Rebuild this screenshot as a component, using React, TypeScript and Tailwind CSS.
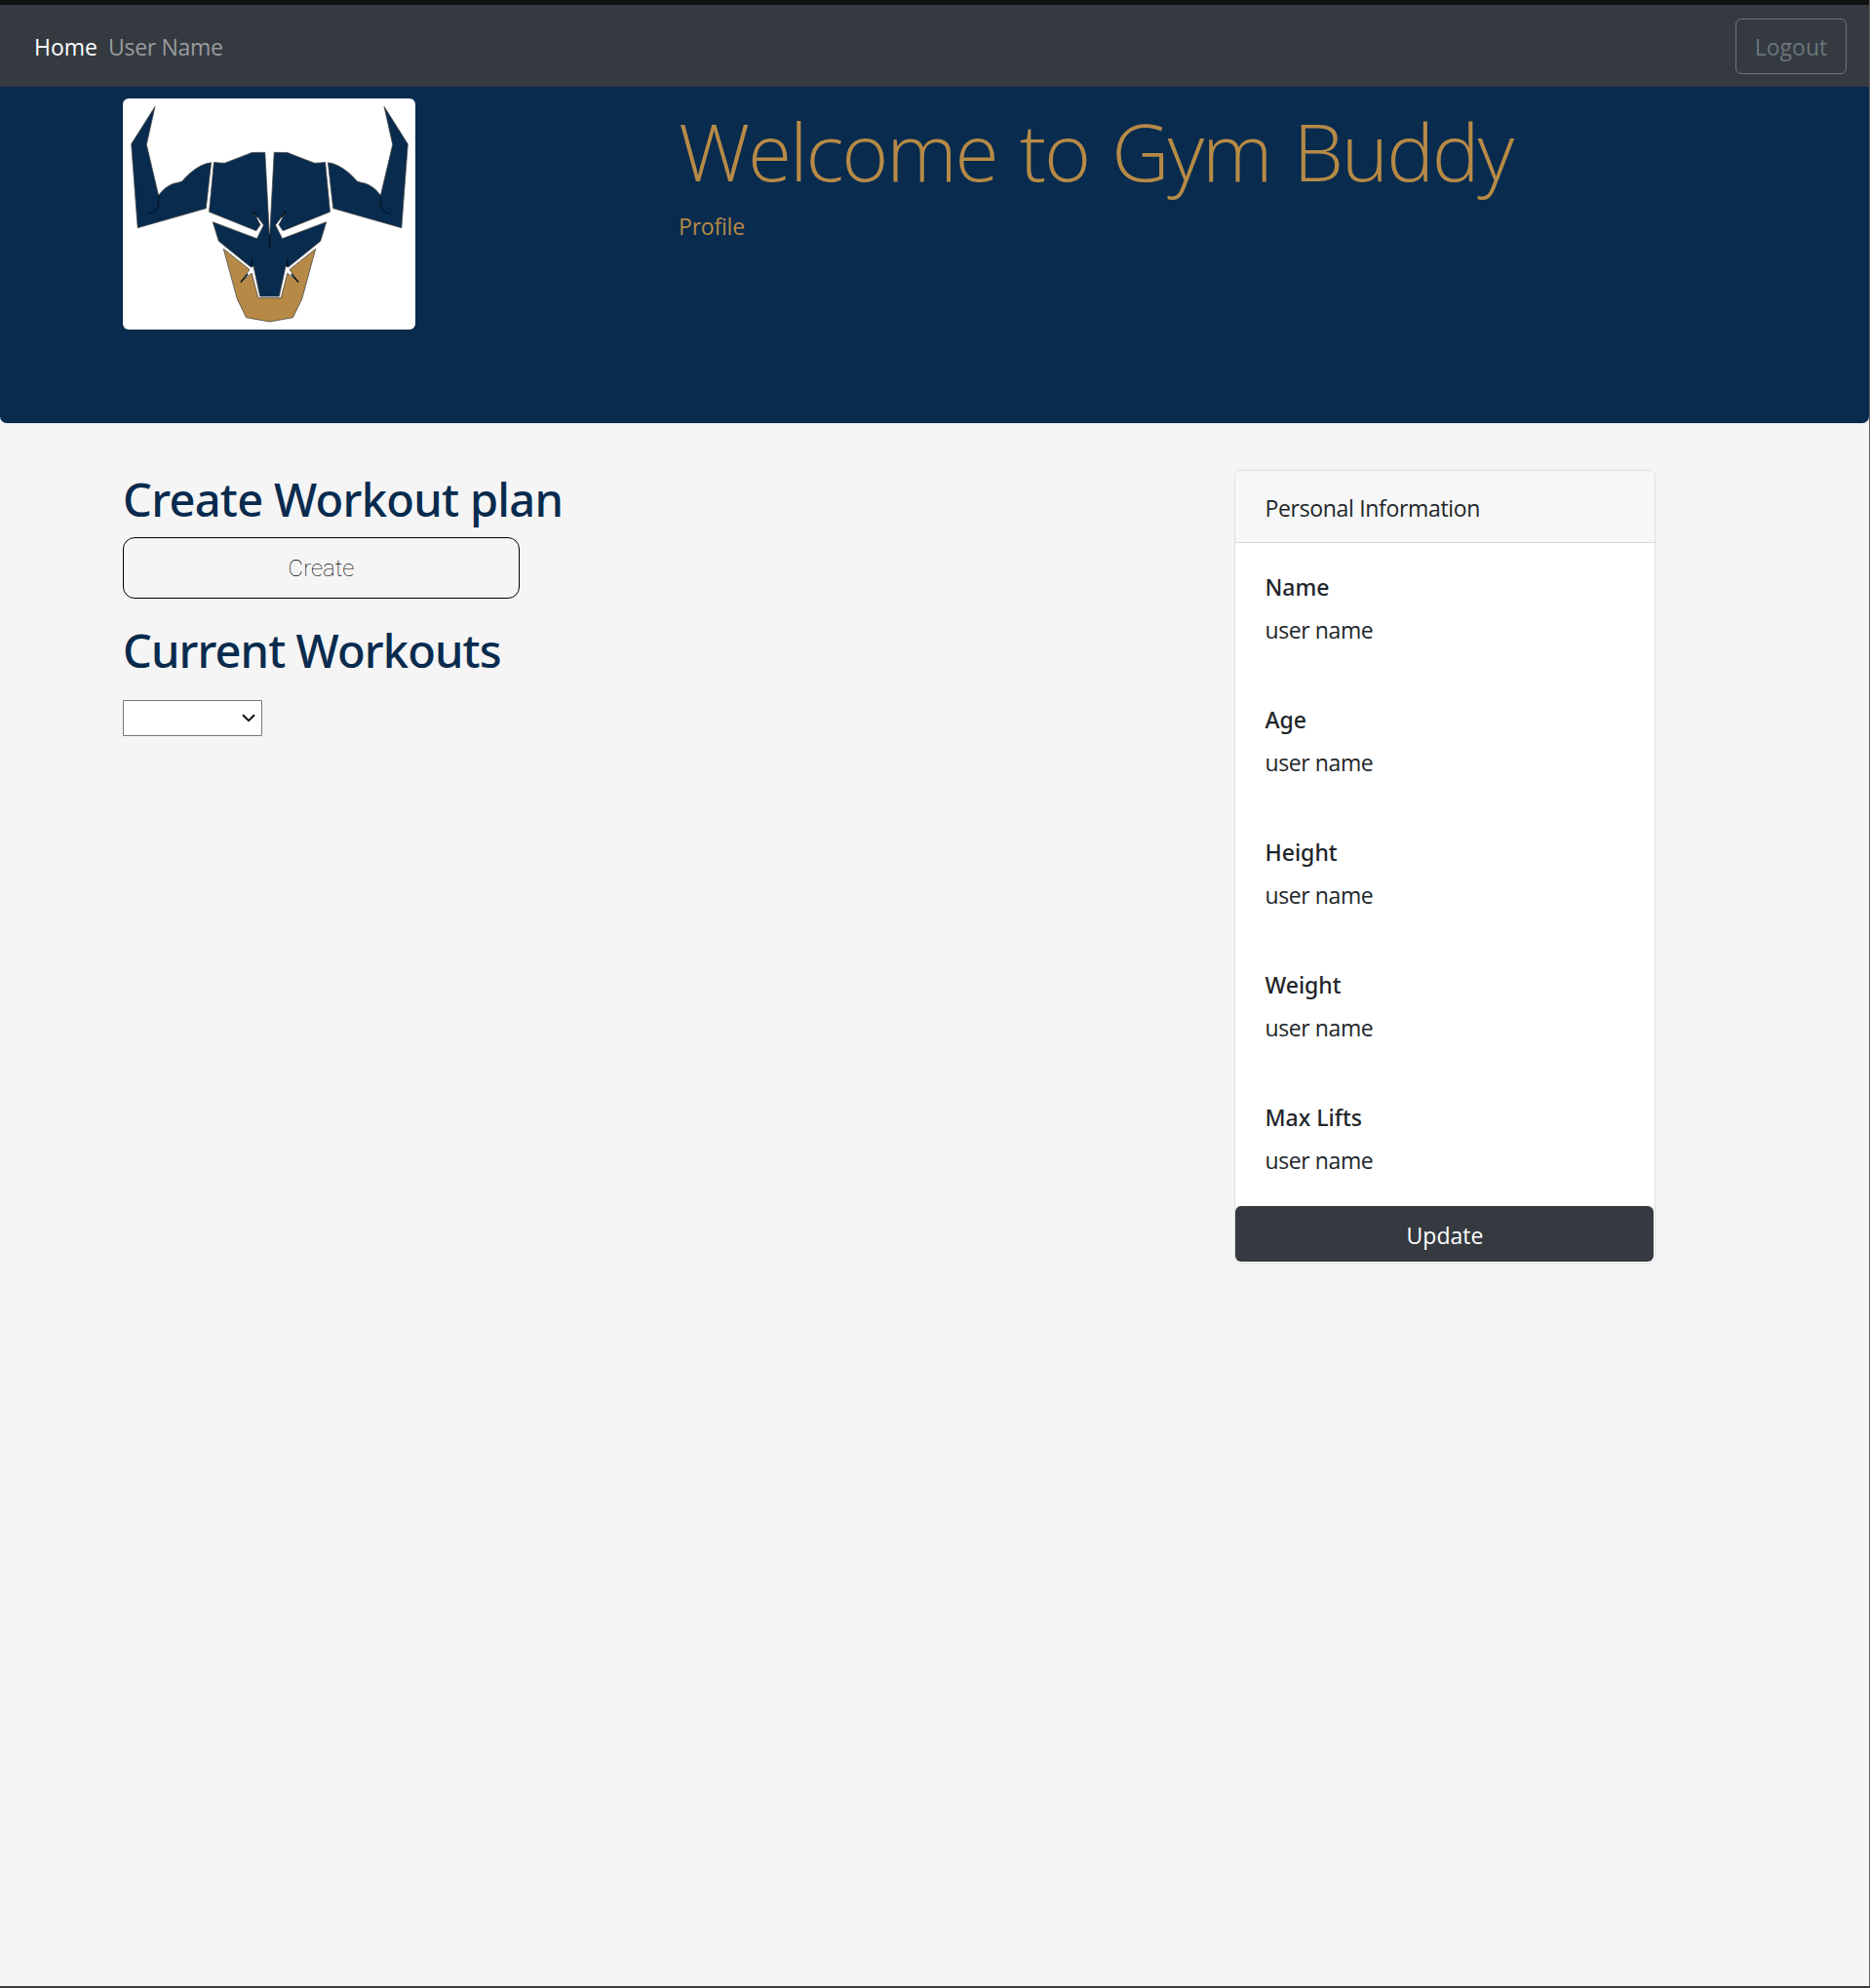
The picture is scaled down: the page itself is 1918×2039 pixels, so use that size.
const stats = ["Name", "Age", "Height", "Weight", "Max Lifts"];

/* Left half of the bull; the right half is the same artwork mirrored. */
function BullHalf() {
  return (
    <>
      <path
        d="M159 109.3 L134.7 147.7 L141.2 233.7 L211.3 213.7 L216.6 166.8 Q207 167.5 195 177.5 Q190 182 186.7 186 Q183 187.4 178 188.2 Q169 191.5 162.6 200.4 L150.3 148.3 Z"
        fill="#082b4e"
      />
      <path
        d="M219.4 166.5 Q226 167.3 230.7 167.2 L258.3 156.5 L271.8 156.3 L276.5 245 L276.5 304 L266.7 304 L260 273 L257.3 274 L224.3 247.3 L218.3 227.7 L263.5 244.7 L270.4 230.9 L264.6 223 L260 217.3 L267 230.6 L262.8 236.7 L214.5 217.3 Z"
        fill="#082b4e"
      />
      <path
        d="M229.3 255.3 L256 276.5 L247.2 289 L258.2 280.2 L264.8 305.6 L276.6 305.6 L276.6 330 L252.6 325.7 L243.3 306.7 Z"
        fill="#b68a46"
      />
    </>
  );
}

function BullDetails() {
  return (
    <g stroke="#05101d" fill="none">
      <path d="M162.6 200.4 L162.5 210 Q162 217 152.3 219.3" strokeWidth="1.1" />
      <path d="M259.8 216.8 L264 222.6" strokeWidth="1.5" />
      <path d="M258.2 265.6 L258.5 273.4" strokeWidth="1.4" />
      <path d="M246.8 289.5 L254.2 281" strokeWidth="1.3" />
    </g>
  );
}

function BullLogo() {
  return (
    <svg viewBox="126 101 300 237" className="block h-[237px] w-[300px]">
      <g stroke="#4a4a48" strokeWidth="0.8">
        <BullHalf />
        <g transform="translate(553 0) scale(-1 1)">
          <BullHalf />
        </g>
      </g>
      {/* Seamless centre joins of the face and jaw */}
      <rect x="274" y="246" width="5" height="57.5" fill="#082b4e" />
      <rect x="274" y="306.1" width="5" height="23.1" fill="#b68a46" />
      <BullDetails />
      <g transform="translate(553 0) scale(-1 1)">
        <BullDetails />
      </g>
      <path d="M276.5 240 L276.5 254" stroke="#05101d" strokeWidth="1.3" />
    </svg>
  );
}

function NavBar() {
  return (
    <nav className="flex h-[84px] items-center justify-between bg-[#343a40] pr-[23px] pl-[35px] text-[23px] leading-9">
      <div className="flex gap-[11px] pt-0.5">
        <a className="text-white">Home</a>
        <a className="tracking-[-0.3px] text-[#999c9f]">User Name</a>
      </div>
      <button className="mt-px h-[57px] w-[114px] rounded-md border border-[#6c757d] pt-px text-[#6c757d]">
        Logout
      </button>
    </nav>
  );
}

function Hero() {
  return (
    <header className="flex h-[345px] rounded-b-[7px] bg-[#082b4e] pt-3 pl-[126px] text-[#b68a46]">
      <div className="h-[237px] w-[300px] overflow-hidden rounded-md bg-white">
        <BullLogo />
      </div>
      <div className="ml-[270px]">
        <h1 className="mt-[3px] text-[82px] leading-[100px] font-light tracking-[-2.1px] whitespace-nowrap [word-spacing:4px]">
          Welcome to Gym Buddy
        </h1>
        <p className="mt-[10px] text-[23px] leading-9 tracking-[-0.2px]">Profile</p>
      </div>
    </header>
  );
}

function Workouts() {
  return (
    <section className="w-[600px] pt-[50px]">
      <h2 className="font-['Noto_Sans',sans-serif] text-[47px] leading-[56px] font-medium tracking-[-0.7px] text-[#082b4e]">
        Create Workout plan
      </h2>
      <button className="mt-[11px] block h-[63px] w-[407px] rounded-xl border border-black font-['Roboto',sans-serif] text-[24px] leading-9 font-thin text-black">
        Create
      </button>
      <h2 className="mt-[25px] font-['Noto_Sans',sans-serif] text-[47px] leading-[56px] font-medium tracking-[-0.9px] text-[#082b4e]">
        Current Workouts
      </h2>
      <div className="mt-[23px] flex h-[37px] w-[143px] items-center justify-end rounded-[1px] border border-[#767676] bg-white pr-[6px]">
        <svg viewBox="0 0 14 9" className="h-[9px] w-[14px]" fill="none" stroke="#101010" strokeWidth="2">
          <path d="M1 1.2 L7 7.2 L13 1.2" />
        </svg>
      </div>
    </section>
  );
}

function PersonalInfo() {
  return (
    <aside className="flex h-[814px] w-[432px] flex-col rounded-md border border-[#dfdfdf] bg-white text-[23px] text-[#212529]">
      <div className="h-[74px] shrink-0 rounded-t-md border-b border-[#d8d8d8] bg-[#f7f7f7] pt-[20px] pl-[30.5px] leading-9 tracking-[-0.33px]">
        Personal Information
      </div>
      <dl className="h-[680px] shrink-0 pt-[27px] pl-[30.5px]">
        {stats.map((label) => (
          <div key={label} className="h-[136px]">
            <dt className="font-['Noto_Sans',sans-serif] leading-9 font-medium">{label}</dt>
            <dd className="mt-2 leading-9 tracking-[-0.4px]">user name</dd>
          </div>
        ))}
      </dl>
      <button className="mr-px h-[57px] shrink-0 rounded-md bg-[#343a40] pt-0.5 pl-px leading-9 text-white">
        Update
      </button>
    </aside>
  );
}

export default function App() {
  return (
    <div className="flex h-[2039px] w-[1918px] flex-col border-r border-b-2 border-r-[#5c5c5c] border-b-[#3b393b] bg-[#f5f5f5] font-['Open_Sans',sans-serif]">
      <div className="h-[5px] bg-[#111111]" />
      <NavBar />
      <Hero />
      <main className="flex flex-1 justify-between pr-[219px] pl-[126px]">
        <Workouts />
        <div className="pt-[48px]">
          <PersonalInfo />
        </div>
      </main>
    </div>
  );
}
